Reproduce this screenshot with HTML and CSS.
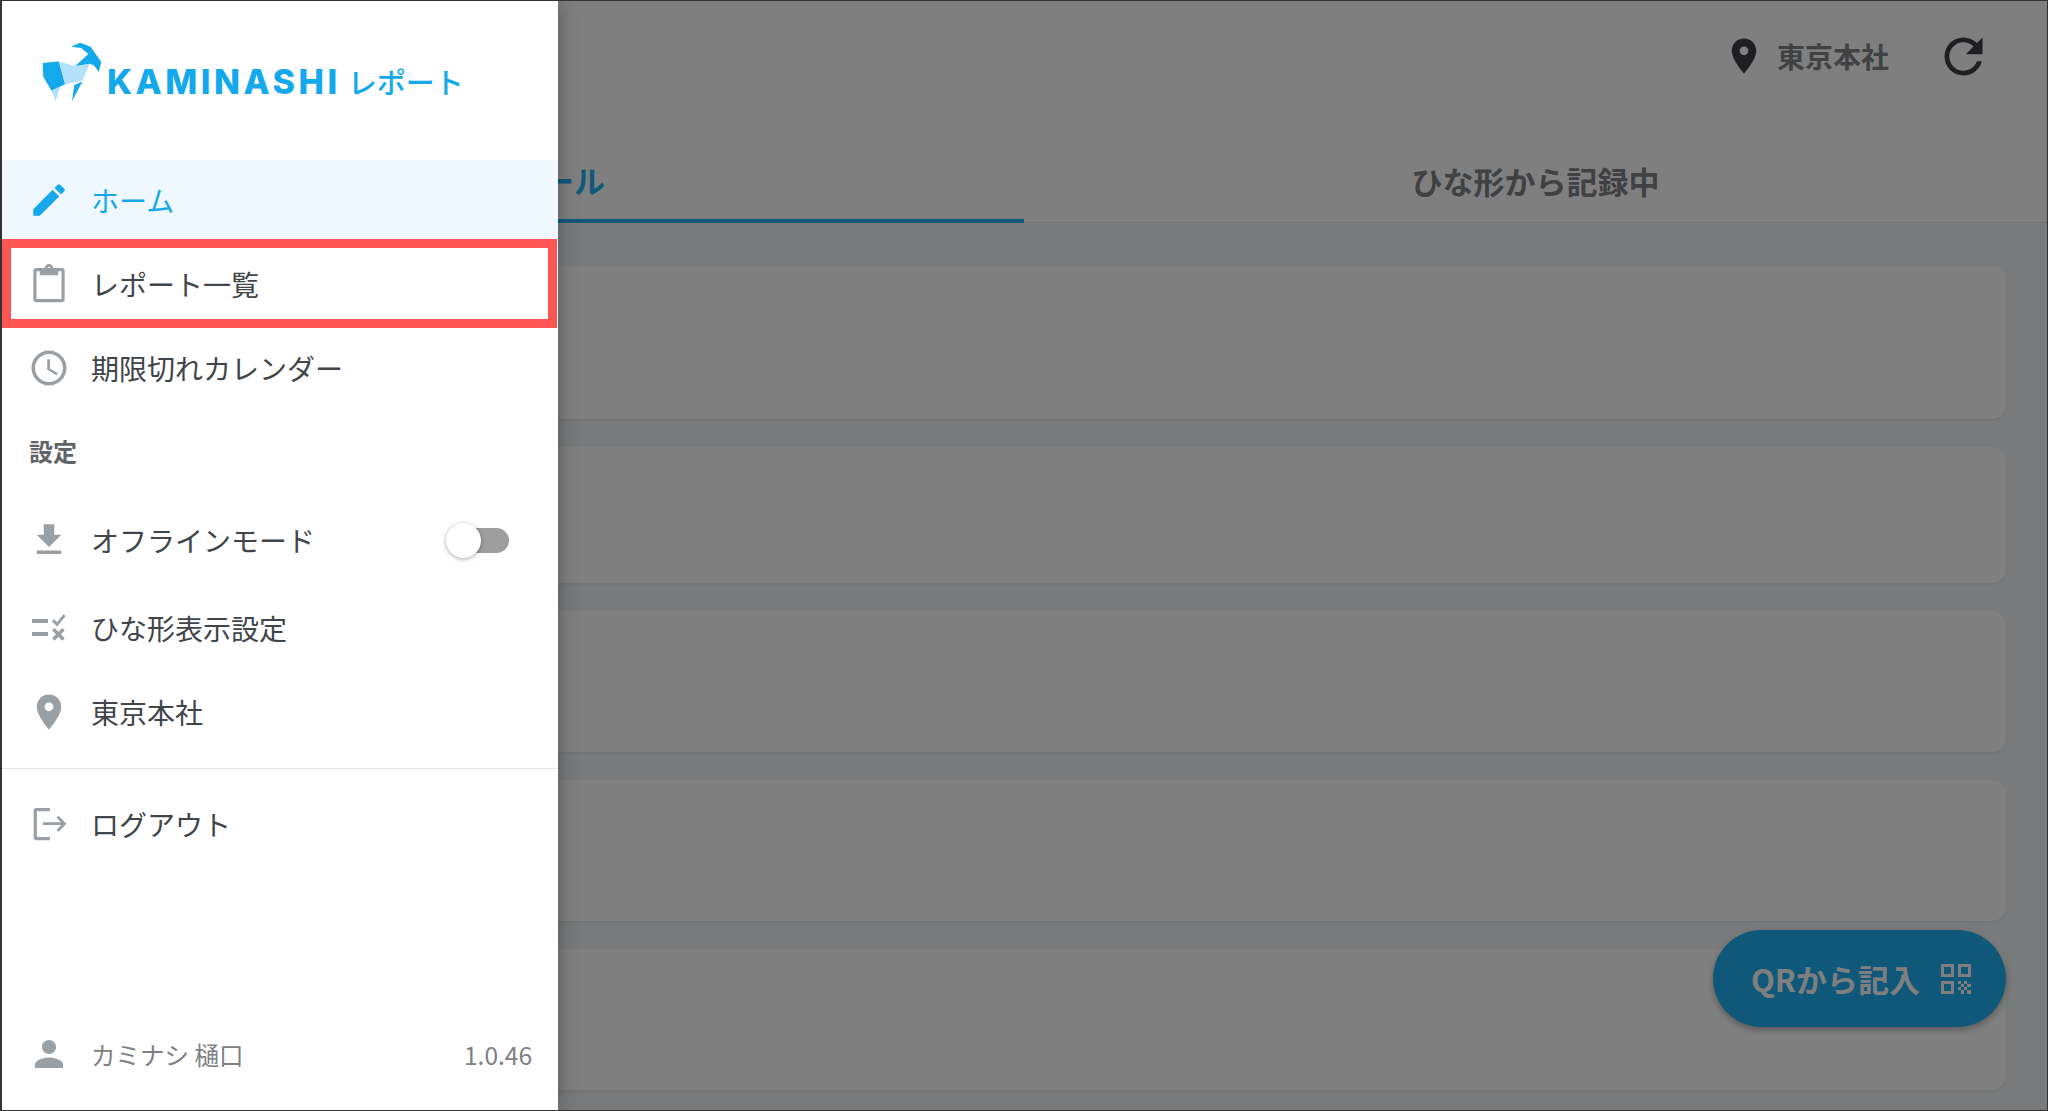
FILE: index.html
```html
<!DOCTYPE html>
<html lang="ja">
<head>
<meta charset="utf-8">
<title>KAMINASHI レポート</title>
<link rel="stylesheet" href="styles.css">
</head>
<body>
<div class="app">
  <main class="page">
    <header class="topbar">
      <svg class="pin-icon" viewBox="0 0 24 24"><path d="M12 2C8.13 2 5 5.13 5 9c0 5.25 7 13 7 13s7-7.75 7-13c0-3.87-3.13-7-7-7zm0 9.5c-1.38 0-2.5-1.12-2.5-2.5s1.12-2.5 2.5-2.5 2.5 1.12 2.5 2.5-1.12 2.5-2.5 2.5z"/></svg>
      <span class="place">東京本社</span>
      <svg class="refresh-icon" viewBox="0 0 24 24"><path d="M17.65 6.35C16.2 4.9 14.21 4 12 4c-4.42 0-7.99 3.58-7.99 8s3.57 8 7.99 8c3.73 0 6.84-2.55 7.73-6h-2.08c-.82 2.33-3.04 4-5.65 4-3.31 0-6-2.69-6-6s2.69-6 6-6c1.66 0 3.14.69 4.22 1.78L13 11h7V4l-2.35 2.35z"/></svg>
    </header>
    <nav class="tabs">
      <div class="tab tab-active">スケジュール</div>
      <div class="tab">ひな形から記録中</div>
    </nav>
    <section class="cards">
      <div class="card card-a"></div>
      <div class="card card-b"></div>
      <div class="card card-c"></div>
      <div class="card card-c"></div>
      <div class="card card-c"></div>
    </section>
    <button class="qr-button">
      <span>QRから記入</span>
      <svg class="qr-icon" viewBox="0 0 30 30">
        <path fill-rule="evenodd" d="M0 0h13v13H0zM3 3v7h7V3zM17 0h13v13H17zM20 3v7h7V3zM0 17h13v13H0zM3 20v7h7v-7z"/>
        <path d="M17 17h3v3h-3zM23 17h3v3h-3zM20 20h3v3h-3zM26 20h4v3h-4zM17 23h3v3h-3zM23 23h3v3h-3zM20 26h3v4h-3zM26 26h4v4h-4z"/>
      </svg>
    </button>
  </main>

  <div class="backdrop"></div>

  <aside class="drawer">
    <div class="logo">
      <svg class="goat" viewBox="66 64 184 183">
        <path class="goat-dark" d="M68 128 118 123 137 193 95 213 70 170z"/>
        <path class="goat-light" d="M118 123 168 137 212 130 190 182 137 193z"/>
        <path class="goat-dark" d="M168 137 208 100 186 82 155 78 183 66 215 78 248 125 240 155 225 135 212 130z"/>
        <path class="goat-dark" d="M190 185 158 245 165 195z"/>
        <path class="goat-light" d="M95 213 122 200 108 245z"/>
      </svg>
      <span class="logo-latin">KAMINASHI</span>
      <span class="logo-kana">レポート</span>
    </div>

    <a class="row row-home row-active">
      <svg class="icon" viewBox="0 0 24 24"><path d="M3 17.25V21h3.75L17.81 9.94l-3.75-3.75L3 17.25zM20.71 7.04c.39-.39.39-1.02 0-1.41l-2.34-2.34c-.39-.39-1.02-.39-1.41 0l-1.83 1.83 3.75 3.75 1.83-1.83z"/></svg>
      <span>ホーム</span>
    </a>
    <a class="row row-report">
      <svg class="icon" viewBox="0 0 24 24">
        <rect class="icon-line" x="3.95" y="3.8" width="16.1" height="17.7" rx="0.8"/>
        <path fill-rule="evenodd" d="M6.7 3h2.9a2.4 2.4 0 0 1 4.8 0h2.9v4H6.7zM12 2.1a.8.8 0 1 0 0 1.6.8.8 0 0 0 0-1.6z"/>
      </svg>
      <span>レポート一覧</span>
    </a>
    <a class="row row-calendar">
      <svg class="icon" viewBox="0 0 24 24"><path d="M11.99 2C6.47 2 2 6.48 2 12s4.47 10 9.99 10C17.52 22 22 17.52 22 12S17.52 2 11.99 2zM12 20c-4.42 0-8-3.58-8-8s3.58-8 8-8 8 3.58 8 8-3.58 8-8 8zm.5-13H11v6l5.25 3.15.75-1.23-4.5-2.67z"/></svg>
      <span>期限切れカレンダー</span>
    </a>

    <div class="section-title">設定</div>

    <a class="row row-offline">
      <svg class="icon" viewBox="0 0 24 24"><path d="M19 9h-4V3H9v6H5l7 7 7-7zM5 18v2h14v-2H5z"/></svg>
      <span class="row-label">オフラインモード</span>
      <span class="toggle"><span class="thumb"></span></span>
    </a>
    <a class="row row-template">
      <svg class="icon" viewBox="0 0 24 24"><path d="M2.3 6.9h9.1v2.2H2.3zM2.3 14.3h9.1v2.2H2.3zM13.6 8.1l1.2-1.2 1.8 1.8 3.6-4.5 1.3 1-4.8 5.9zM13.8 13.4l1.4-1.4 2.2 2.2 2.2-2.2 1.4 1.4-2.2 2.2 2.2 2.3-1.4 1.4-2.2-2.2-2.2 2.2-1.4-1.4 2.2-2.3z"/></svg>
      <span>ひな形表示設定</span>
    </a>
    <a class="row row-place">
      <svg class="icon" viewBox="0 0 24 24"><path d="M12 2C8.13 2 5 5.13 5 9c0 5.25 7 13 7 13s7-7.75 7-13c0-3.87-3.13-7-7-7zm0 9.5c-1.38 0-2.5-1.12-2.5-2.5s1.12-2.5 2.5-2.5 2.5 1.12 2.5 2.5-1.12 2.5-2.5 2.5z"/></svg>
      <span>東京本社</span>
    </a>

    <hr class="divider">

    <a class="row row-logout">
      <svg class="icon" viewBox="0 0 24 24">
        <path class="icon-line" d="M12.5 3.75H4.8c-.4 0-.65.25-.65.65V19.7c0 .4.25.65.65.65h7.7"/>
        <path class="icon-line icon-line-thin" d="M8.5 11.8h12.4M16.9 7.8l4 4-4 4"/>
      </svg>
      <span>ログアウト</span>
    </a>

    <footer class="drawer-footer">
      <svg class="icon" viewBox="0 0 24 24"><path d="M12 12c2.21 0 4-1.79 4-4s-1.79-4-4-4-4 1.79-4 4 1.79 4 4 4zm0 2c-2.67 0-8 1.34-8 4v2h16v-2c0-2.66-5.33-4-8-4z"/></svg>
      <span class="footer-name">カミナシ 樋口</span>
      <span class="version">1.0.46</span>
    </footer>
  </aside>
</div>
</body>
</html>
```

FILE: styles.css
```css
* { box-sizing: border-box; }

html, body {
  margin: 0;
  height: 100%;
  overflow: hidden;
}

body {
  font-family: "Noto Sans CJK JP", "Noto Sans", sans-serif;
  color: #3f4549;
  background: #fff;
}

.app {
  position: relative;
  width: 2048px;
  height: 1111px;
  overflow: hidden;
  border: 1px solid #333;
  border-left-width: 2px;
}

/* page behind the drawer */
.page {
  height: 100%;
  background: #f2f4f6;
  display: flex;
  flex-direction: column;
  overflow: hidden;
}

.topbar {
  height: 110px;
  flex: none;
  background: #fff;
  display: flex;
  align-items: center;
  justify-content: flex-end;
  padding-right: 55px;
}

.pin-icon { width: 42px; height: 42px; fill: #3c3f44; }

.place {
  margin-left: 12px;
  font-size: 28px;
  font-weight: 700;
  color: #7f8284;
}

.refresh-icon { width: 57px; height: 57px; margin-left: 46px; fill: #3c3f44; }

.tabs {
  height: 112px;
  flex: none;
  display: grid;
  grid-template-columns: 1022px 1fr;
  background: #fff;
  border-bottom: 1px solid #e4e4e4;
}

.tab {
  display: flex;
  align-items: center;
  justify-content: center;
  padding-top: 28px;
  font-size: 31px;
  font-weight: 700;
  color: #7f8284;
}

.tab-active {
  color: #1eb0f4;
  border-bottom: 4px solid #1eb0f4;
  margin-bottom: -1px;
}

.cards {
  display: flex;
  flex-direction: column;
  gap: 28px;
  padding: 43px 41px 0;
}

.card {
  flex: none;
  background: #fff;
  border-radius: 14px;
  box-shadow: 0 1px 3px rgba(0, 0, 0, .08);
}

.card-a { height: 153px; }
.card-b { height: 136px; }
.card-c { height: 141px; }

.qr-button {
  position: absolute;
  right: 41px;
  top: 929px;
  width: 293px;
  height: 97px;
  padding: 0 35px 0 38px;
  display: flex;
  align-items: center;
  justify-content: space-between;
  border: 0;
  border-radius: 49px;
  background: #1eb0f4;
  color: #fff;
  font-family: inherit;
  font-size: 31px;
  font-weight: 700;
  box-shadow: 0 3px 6px rgba(0, 0, 0, .3);
}

.qr-icon { width: 30px; height: 30px; fill: #fff; }

.backdrop {
  position: absolute;
  inset: 0;
  background: rgba(0, 0, 0, .5);
}

/* drawer */
.drawer {
  position: absolute;
  left: 0;
  top: 0;
  bottom: 0;
  width: 556px;
  background: #fff;
  display: flex;
  flex-direction: column;
  box-shadow: 0 0 20px rgba(0, 0, 0, .3);
}

.logo {
  height: 159px;
  flex: none;
  display: flex;
  align-items: flex-start;
  padding: 41px 0 0 40px;
  color: #14a9ec;
}

.goat { width: 60px; height: 60px; flex: none; }
.goat-dark { fill: #14a9ec; }
.goat-light { fill: #b4e2fd; }

.logo-latin {
  margin: 19px 0 0 5px;
  font-family: Inter, "Liberation Sans", sans-serif;
  font-size: 34px;
  line-height: 41px;
  font-weight: 800;
  letter-spacing: 3.5px;
}

.logo-kana {
  margin: 19px 0 0 7px;
  font-size: 29px;
  line-height: 41px;
  font-weight: 500;
}

.row {
  flex: none;
  display: flex;
  align-items: center;
  gap: 21px;
  padding-left: 26px;
  font-size: 28px;
  color: #3f4549;
}

.icon { width: 42px; height: 42px; flex: none; fill: #9a9fa3; }

.icon-line {
  fill: none;
  stroke: #9a9fa3;
  stroke-width: 1.8;
}

.icon-line-thin { stroke-width: 1.6; }

.row-home { height: 79px; }
.row-active { background: #eff8fe; color: #16a8ea; }
.row-active .icon { fill: #16a8ea; }

.row-report {
  height: 89px;
  border: 9px solid #fd5454;
  padding-left: 17px;
  margin-right: 1px;
  background: #fff;
}

.row-calendar { height: 79px; }

.section-title {
  height: 91px;
  flex: none;
  display: flex;
  align-items: center;
  padding: 0 0 4px 27px;
  font-size: 24px;
  font-weight: 700;
  color: #5f6468;
}

.row-offline { height: 84px; }
.row-template { height: 92px; }
.row-place { height: 76px; }

.row-label { flex: 1; }

.toggle {
  position: relative;
  width: 46px;
  height: 25px;
  margin-right: 49px;
  border-radius: 13px;
  background: #9e9e9e;
}

.thumb {
  position: absolute;
  left: -17px;
  top: -5px;
  width: 35px;
  height: 35px;
  border-radius: 50%;
  background: #fff;
  box-shadow: 0 1px 4px rgba(0, 0, 0, .35);
}

.divider {
  flex: none;
  width: 100%;
  height: 1px;
  margin: 18px 0 0;
  border: 0;
  background: #e2e2e2;
}

.row-logout { height: 110px; }

.drawer-footer {
  margin-top: auto;
  height: 110px;
  flex: none;
  display: flex;
  align-items: center;
  gap: 21px;
  padding: 0 26px 2px;
  font-size: 24.5px;
  color: #7d8084;
}

.footer-name { flex: 1; }
```
